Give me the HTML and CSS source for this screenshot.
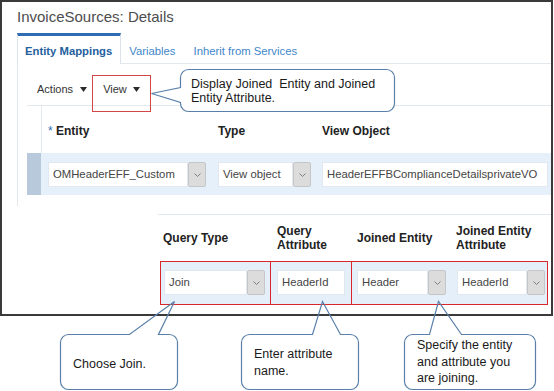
FILE: index.html
```html
<!DOCTYPE html>
<html>
<head>
<meta charset="utf-8">
<link rel="stylesheet" href="styles.css">
</head>
<body>
<div class="page">
  <div class="frame">
    <div class="title">InvoiceSources: Details</div>
    <div class="tabs">
      <div class="tab active">Entity Mappings</div>
      <div class="tab tab-first">Variables</div>
      <div class="tab">Inherit from Services</div>
      <div class="tab-fill"></div>
    </div>
    <div class="panel">
      <div class="toolbar">
        <span class="menu">Actions<svg class="caret" width="7" height="5" viewBox="0 0 7 5"><polygon points="0,0 7,0 3.5,5"/></svg></span>
        <span class="menu menu-view">View<svg class="caret" width="7" height="5" viewBox="0 0 7 5"><polygon points="0,0 7,0 3.5,5"/></svg></span>
      </div>
      <div class="grid-head">
        <div class="th"><span class="req">*</span> Entity</div>
        <div class="th">Type</div>
        <div class="th">View Object</div>
      </div>
      <div class="grid-row">
        <div class="sel"></div>
        <div class="cells">
          <div class="combo w-entity"><span class="field">OMHeaderEFF_Custom</span><span class="btn"><svg width="7" height="4" viewBox="0 0 7 4"><polyline points="0.5,0.5 3.5,3.5 6.5,0.5"/></svg></span></div>
          <div class="combo w-type"><span class="field">View object</span><span class="btn"><svg width="7" height="4" viewBox="0 0 7 4"><polyline points="0.5,0.5 3.5,3.5 6.5,0.5"/></svg></span></div>
          <div class="combo w-vo"><span class="field">HeaderEFFBComplianceDetailsprivateVO</span></div>
        </div>
      </div>
    </div>
    <div class="lower">
      <div class="lhead">
        <div class="lth h1">Query Type</div>
        <div class="lth h2">Query<br>Attribute</div>
        <div class="lth h3">Joined Entity</div>
        <div class="lth h4">Joined Entity<br>Attribute</div>
      </div>
      <div class="lrow">
        <div class="lcell c1"><div class="combo w-join"><span class="field">Join</span><span class="btn"><svg width="7" height="4" viewBox="0 0 7 4"><polyline points="0.5,0.5 3.5,3.5 6.5,0.5"/></svg></span></div></div>
        <div class="lcell c2"><div class="combo w-qattr"><span class="field">HeaderId</span></div></div>
        <div class="lcell c3"><div class="combo w-jent"><span class="field">Header</span><span class="btn"><svg width="7" height="4" viewBox="0 0 7 4"><polyline points="0.5,0.5 3.5,3.5 6.5,0.5"/></svg></span></div></div>
        <div class="lcell c4"><div class="combo w-jattr"><span class="field">HeaderId</span><span class="btn"><svg width="7" height="4" viewBox="0 0 7 4"><polyline points="0.5,0.5 3.5,3.5 6.5,0.5"/></svg></span></div></div>
      </div>
    </div>
  </div>

  <div class="mark-view"></div>

  <svg class="overlay" width="554" height="391" viewBox="0 0 554 391">
    <g transform="translate(0.5,0.5)">
      <path class="filled" d="M188,69 H386 A8,8 0 0 1 394,77 V103 A8,8 0 0 1 386,111 H188 A8,8 0 0 1 180,103 V102 L151,93 L180,87 V77 A8,8 0 0 1 188,69 Z"/>
      <path d="M68,334 H129 L174,301 L158,334 H169 A8,8 0 0 1 177,342 V381 A8,8 0 0 1 169,389 H68 A8,8 0 0 1 60,381 V342 A8,8 0 0 1 68,334 Z"/>
      <path d="M249,334 H312 L322,301 L340,334 H350 A8,8 0 0 1 358,342 V381 A8,8 0 0 1 350,389 H249 A8,8 0 0 1 241,381 V342 A8,8 0 0 1 249,334 Z"/>
      <path d="M412,334 H429 L438,301 L461,334 H527 A8,8 0 0 1 535,342 V381 A8,8 0 0 1 527,389 H412 A8,8 0 0 1 404,381 V342 A8,8 0 0 1 412,334 Z"/>
    </g>
  </svg>

  <div class="note n1">Display Joined&nbsp; Entity and Joined<br>Entity Attribute.</div>
  <div class="note n2">Choose Join.</div>
  <div class="note n3">Enter attribute<br>name.</div>
  <div class="note n4">Specify the entity<br>and attribute you<br>are joining.</div>
</div>
</body>
</html>
```

FILE: styles.css
```css
* { box-sizing: border-box; }

html, body {
  margin: 0;
  padding: 0;
  background: #ffffff;
}

body {
  font-family: "Liberation Sans", Arial, sans-serif;
  color: #333333;
}

.page {
  position: relative;
  width: 554px;
  height: 391px;
  overflow: hidden;
}

.frame {
  width: 553px;
  height: 316px;
  border: 2px solid #3a3a3a;
  overflow: hidden;
  background: #ffffff;
}

.title {
  margin: 6px 0 0 15px;
  font-size: 15px;
  line-height: 18px;
  color: #4d4d4d;
}

/* tabs */
.tabs {
  display: flex;
  margin: 7px 0 0 15px;
  height: 31px;
}

.tab {
  padding: 11px 9px 0 9px;
  font-size: 11.3px;
  line-height: 14px;
  color: #4087c9;
  border-bottom: 1px solid #e3e8ed;
  white-space: nowrap;
}

.tab-first {
  padding-left: 8px;
}

.tab.active {
  padding: 8px 8px 0 7px;
  border: 1px solid #dde3e9;
  border-top: 3px solid #2e6db4;
  border-bottom: none;
  color: #25609f;
  font-weight: bold;
  background: #ffffff;
}

.tab-fill {
  flex: 1;
  border-bottom: 1px solid #e3e8ed;
}

/* panel */
.panel {
  margin-left: 15px;
  border-left: 1px solid #e3e8ed;
  padding: 0 0 11px 9px;
}

.toolbar {
  padding: 18px 0 9px 10px;
  font-size: 11px;
  line-height: 14px;
  color: #333333;
  border-bottom: 1px solid #e3e8ed;
  white-space: nowrap;
}

.menu .caret {
  margin-left: 7px;
  vertical-align: 1px;
  fill: #2b2b2b;
}

.menu-view {
  margin-left: 13px;
}

.menu-view .caret {
  margin-left: 6px;
}

.grid-head {
  margin-left: 14px;
  border-left: 1px solid #e4e9ee;
  padding: 18px 0 15px 6px;
  display: grid;
  grid-template-columns: 170px 104px 1fr;
  font-size: 12px;
  line-height: 14px;
  font-weight: bold;
  color: #222222;
}

.req {
  color: #2f6fb5;
  font-weight: normal;
}

.grid-row {
  display: flex;
  height: 42px;
}

.sel {
  width: 14px;
  background: #b7c9da;
}

.cells {
  flex: 1;
  background: #e6f0fb;
  display: grid;
  grid-template-columns: 170px 104px 1fr;
  padding: 9px 0 8px 7px;
}

/* combo boxes */
.combo {
  display: flex;
  height: 25px;
}

.field {
  flex: 1;
  background: #ffffff;
  border: 1px solid #e2e8ef;
  padding-left: 4px;
  font-size: 11.3px;
  line-height: 23px;
  color: #454545;
  white-space: nowrap;
  overflow: hidden;
}

.btn {
  width: 18px;
  background: #dcdcdc;
  border: 1px solid #c6c6c6;
  border-radius: 2px;
  display: flex;
  align-items: center;
  justify-content: center;
}

.btn svg polyline {
  fill: none;
  stroke: #7d7d7d;
  stroke-width: 1;
}

.w-entity { width: 158px; }
.w-type { width: 93px; }
.w-vo { width: 226px; }
.w-join { width: 101px; }
.w-qattr { width: 68px; }
.w-jent { width: 89px; }
.w-jattr { width: 88px; }

/* lower section */
.lower {
  margin: 8px 0 0 156px;
  border-top: 1px solid #e2e8ee;
  padding-left: 2px;
}

.lhead {
  display: grid;
  grid-template-columns: 110px 81px 100px 95px;
  margin-left: 1px;
  height: 46px;
  align-items: center;
  font-size: 12px;
  line-height: 14px;
  font-weight: bold;
  color: #222222;
}

.h1 { padding-left: 2px; }
.h2 { padding-left: 6px; }
.h3 { padding-left: 5px; }
.h4 { padding-left: 4px; }

.lrow {
  display: grid;
  grid-template-columns: 110px 81px 100px 95px;
  width: 388px;
  border: 1px solid #d9262c;
  background: #e5effa;
  padding: 8px 0 9px 0;
}

.c1, .c2 {
  border-right: 1px solid #d9262c;
  margin: -8px 0 -9px 0;
  padding-top: 8px;
  padding-bottom: 9px;
}

.c1 { padding-left: 3px; }
.c2 { padding-left: 6px; }
.c3 { padding-left: 5px; }
.c4 { padding-left: 5px; }

/* annotations */
.mark-view {
  position: absolute;
  left: 92px;
  top: 75px;
  width: 59px;
  height: 37px;
  border: 1px solid #d24646;
}

.overlay {
  position: absolute;
  left: 0;
  top: 0;
}

.overlay path {
  fill: none;
  stroke: #5a80aa;
  stroke-width: 1.2;
}

.overlay path.filled {
  fill: #ffffff;
}

.note {
  position: absolute;
  font-size: 12.5px;
  color: #1a1a1a;
  white-space: nowrap;
}

.n1 { left: 191px; top: 77px; line-height: 14px; }
.n2 { left: 73px; top: 356px; line-height: 17px; }
.n3 { left: 254px; top: 346px; line-height: 17px; }
.n4 { left: 417px; top: 337px; line-height: 16.5px; }
```
